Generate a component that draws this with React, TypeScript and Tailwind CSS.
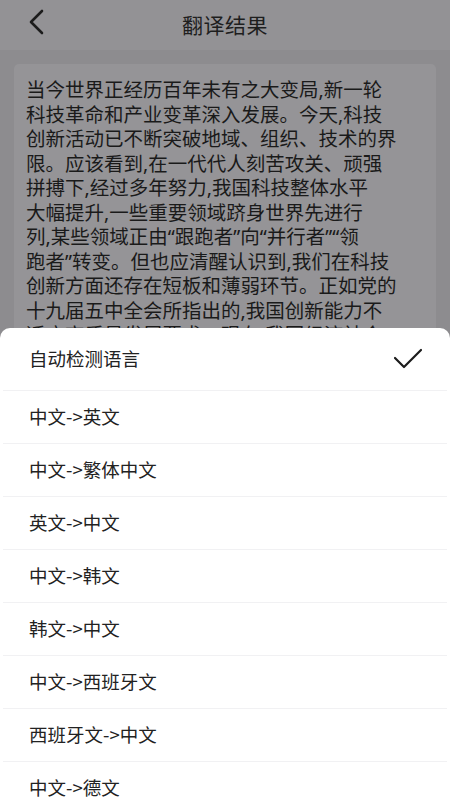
import React from "react";

const lines = [
  "当今世界正经历百年未有之大变局,新一轮",
  "科技革命和产业变革深入发展。今天,科技",
  "创新活动已不断突破地域、组织、技术的界",
  "限。应该看到,在一代代人刻苦攻关、顽强",
  "拼搏下,经过多年努力,我国科技整体水平",
  "大幅提升,一些重要领域跻身世界先进行",
  "列,某些领域正由“跟跑者”向“并行者”“领",
  "跑者”转变。但也应清醒认识到,我们在科技",
  "创新方面还存在短板和薄弱环节。正如党的",
  "十九届五中全会所指出的,我国创新能力不",
  "适应高质量发展要求。现在,我国经济社会",
  "发展比过去任何时候都更加需要科学技术",
];

const options = [
  "中文->英文",
  "中文->繁体中文",
  "英文->中文",
  "中文->韩文",
  "韩文->中文",
  "中文->西班牙文",
  "西班牙文->中文",
  "中文->德文",
];

const font = { fontFamily: '"Noto Sans CJK SC", "Noto Sans", sans-serif' };
const cardFont = { fontFamily: '"Noto Sans", "Noto Sans CJK SC", sans-serif' };

export default function App() {
  return (
    <div
      className="relative w-[450px] h-[800px] overflow-hidden bg-[#8d8c8f] flex flex-col"
      style={font}
    >
      <div className="h-[50px] shrink-0 bg-[#939295] relative flex items-center justify-center">
        <svg
          className="absolute left-[27px] top-[9px]"
          width="20"
          height="26"
          viewBox="0 0 20 26"
          fill="none"
        >
          <path d="M15 2 L4 13 L15 24" stroke="#1c1c1c" strokeWidth="2.6" strokeLinecap="round" strokeLinejoin="round" />
        </svg>
        <span className="text-[21px] text-[#1e1e1e] tracking-[0.5px]">翻译结果</span>
      </div>
      <div className="px-[14px] pt-[14px]">
        <div
          className="bg-[#959497] rounded-[5px] pl-[12px] pr-[10px] pt-[14px] pb-4 text-[19.5px] leading-[24.5px] text-[#1a1a1a]"
          style={cardFont}
        >
          {lines.map((l, i) => (
            <div key={i} className="whitespace-nowrap">
              {l}
            </div>
          ))}
        </div>
      </div>

      <div className="absolute left-0 right-0 top-[328px] bottom-0 bg-white rounded-t-[10px] overflow-hidden">
        <div className="h-[63px] flex items-center justify-between pl-[26px] pr-[23px] border-b border-[#f1f1f3] mx-[3px]">
          <span className="text-[18.5px] text-[#222]">自动检测语言</span>
          <svg width="32" height="24" viewBox="0 0 32 24" fill="none">
            <path d="M3 11 L12 20 L29 3" stroke="#1c1c1c" strokeWidth="2.2" strokeLinecap="round" strokeLinejoin="round" />
          </svg>
        </div>
        {options.map((o) => (
          <div
            key={o}
            className="h-[53px] flex items-center pl-[26px] border-b border-[#f1f1f3] mx-[3px]"
          >
            <span className="text-[18.5px] text-[#222]">{o}</span>
          </div>
        ))}
      </div>
    </div>
  );
}
